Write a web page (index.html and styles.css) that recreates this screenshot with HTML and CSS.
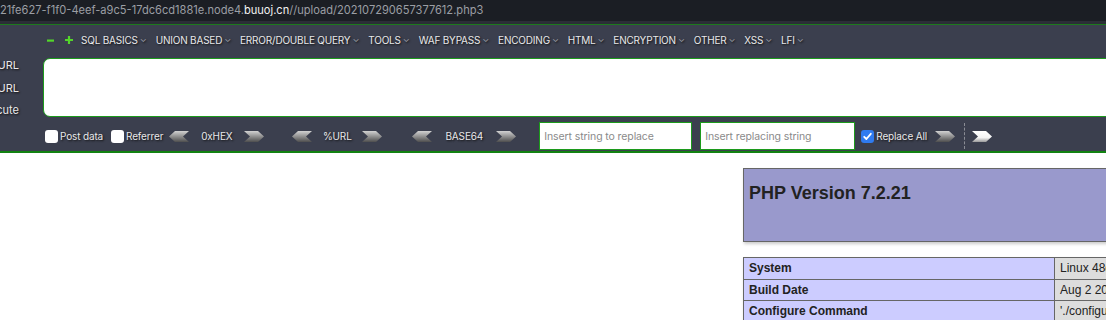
FILE: index.html
```html
<!DOCTYPE html>
<html lang="en">
<head>
  <meta charset="UTF-8" />
  <title>phpinfo()</title>
  <link rel="stylesheet" href="styles.css">
</head>
<body>

  <!-- shared arrow shapes -->
  <svg class="defs" width="0" height="0">
    <defs>
      <linearGradient id="g-grey" x1="0" y1="0" x2="0" y2="1">
        <stop offset="0" stop-color="#d2d2d2"/>
        <stop offset="1" stop-color="#4e4e4e"/>
      </linearGradient>
      <linearGradient id="g-white" x1="0" y1="0" x2="0" y2="1">
        <stop offset="0" stop-color="#ffffff"/>
        <stop offset="0.6" stop-color="#f4f4f4"/>
        <stop offset="1" stop-color="#9a9a9a"/>
      </linearGradient>
      <symbol id="arr-l" viewBox="0 0 20 11">
        <path d="M0 5.5 L6 0 H20 L14 5.5 L20 11 H6 Z"/>
      </symbol>
      <symbol id="arr-r" viewBox="0 0 20 11">
        <path d="M20 5.5 L14 0 H0 L6 5.5 L0 11 H14 Z"/>
      </symbol>
    </defs>
  </svg>

  <div class="urlbar">
    <span>21fe627-f1f0-4eef-a9c5-17dc6cd1881e.node4.</span><span class="host">buuoj.cn</span><span>//upload/202107290657377612.php3</span>
  </div>
  <div class="urlbar-edge"></div>

  <div class="hackbar">
    <div class="menu">
      <span class="tog">
        <svg width="7" height="7" viewBox="0 0 7 7"><rect x="0" y="2.5" width="7" height="2.2" fill="#53d62a"/></svg>
      </span>
      <span class="tog">
        <svg width="8" height="8" viewBox="0 0 8 8"><path d="M2.9 0 H5.1 V2.9 H8 V5.1 H5.1 V8 H2.9 V5.1 H0 V2.9 H2.9 Z" fill="#53d62a"/></svg>
      </span>
      <span class="item">SQL BASICS<i>⌄</i></span>
      <span class="item">UNION BASED<i>⌄</i></span>
      <span class="item">ERROR/DOUBLE QUERY<i>⌄</i></span>
      <span class="item">TOOLS<i>⌄</i></span>
      <span class="item">WAF BYPASS<i>⌄</i></span>
      <span class="item">ENCODING<i>⌄</i></span>
      <span class="item">HTML<i>⌄</i></span>
      <span class="item">ENCRYPTION<i>⌄</i></span>
      <span class="item">OTHER<i>⌄</i></span>
      <span class="item">XSS<i>⌄</i></span>
      <span class="item">LFI<i>⌄</i></span>
    </div>

    <div class="main">
      <div class="actions">
        <span>Load URL</span>
        <span>Split URL</span>
        <span>Execute</span>
      </div>
      <textarea class="url-input"></textarea>
    </div>

    <div class="options">
      <label class="opt"><span class="box"></span>Post data</label>
      <label class="opt"><span class="box"></span>Referrer</label>

      <span class="enc">
        <svg class="arr"><use href="#arr-l" fill="url(#g-grey)"/></svg>
        <span class="enc-name hex">0xHEX</span>
        <svg class="arr"><use href="#arr-r" fill="url(#g-grey)"/></svg>
      </span>
      <span class="enc">
        <svg class="arr"><use href="#arr-l" fill="url(#g-grey)"/></svg>
        <span class="enc-name pct">%URL</span>
        <svg class="arr"><use href="#arr-r" fill="url(#g-grey)"/></svg>
      </span>
      <span class="enc">
        <svg class="arr"><use href="#arr-l" fill="url(#g-grey)"/></svg>
        <span class="enc-name b64">BASE64</span>
        <svg class="arr"><use href="#arr-r" fill="url(#g-grey)"/></svg>
      </span>

      <input class="rep" type="text" placeholder="Insert string to replace">
      <input class="rep" type="text" placeholder="Insert replacing string">

      <label class="opt all">
        <span class="box on">
          <svg width="13" height="13" viewBox="0 0 13 13"><path d="M3.2 6.8 L5.4 9 L9.8 3.8" fill="none" stroke="#fff" stroke-width="1.8" stroke-linecap="round" stroke-linejoin="round"/></svg>
        </span>Replace All
      </label>
      <svg class="arr go"><use href="#arr-r" fill="url(#g-grey)"/></svg>
      <span class="sep"></span>
      <svg class="arr go2"><use href="#arr-r" fill="url(#g-white)"/></svg>
    </div>
  </div>

  <div class="center">
    <table class="head">
      <tr><td class="h"><h1>PHP Version 7.2.21</h1></td></tr>
    </table>
    <table class="info">
      <tr><td class="e">System</td><td class="v">Linux 48d2c0e7a1f3 4.15.0-1067-aws #71-Ubuntu SMP x86_64</td></tr>
      <tr><td class="e">Build Date</td><td class="v">Aug 2 2019 23:51:23</td></tr>
      <tr><td class="e">Configure Command</td><td class="v">'./configure' '--build=x86_64-linux-gnu'</td></tr>
    </table>
  </div>

</body>
</html>
```

FILE: styles.css
```css
body {
  margin: 0;
  background-color: #fff;
  overflow: hidden;
  font-family: Inter, 'Noto Sans', sans-serif;
}

.defs {
  position: absolute;
}

/* address bar */
.urlbar {
  height: 21px;
  line-height: 21px;
  background-color: #1b1e24;
  color: #9b9ea4;
  font-size: 11.1px;
  white-space: nowrap;
  overflow: hidden;
}

.urlbar .host {
  color: #f2f2f2;
}

.urlbar-edge {
  height: 3px;
  background-color: #2b2e36;
}

/* hackbar panel */
.hackbar {
  background-color: #3b3f4e;
  border-top: 1px solid #1d7a1d;
  border-bottom: 2px solid #128212;
  color: #e8e8ea;
  text-shadow: 1px 1px 2px #111;
}

.menu {
  height: 30px;
  padding-bottom: 3px;
  display: flex;
  align-items: center;
  padding-left: 47px;
  font-size: 10px;
  letter-spacing: -0.2px;
  white-space: nowrap;
}

.tog {
  display: flex;
  align-items: center;
  margin-right: 11px;
}

.tog + .tog {
  margin-right: 8px;
}

.item {
  margin-right: 9px;
}

.item i {
  font-style: normal;
  color: #9a9ca4;
  font-size: 9px;
  margin-left: 2px;
  position: relative;
  top: -2px;
}

.main {
  display: flex;
  height: 59px;
}

.actions {
  width: 19px;
  display: flex;
  flex-direction: column;
  align-items: flex-end;
  justify-content: space-between;
  padding: 0;
  font-size: 11px;
  white-space: nowrap;
  margin-right: 24px;
}

.actions span {
  line-height: 14px;
}

.url-input {
  flex: 1;
  margin: 0 -20px 0 0;
  border: 1px solid #1c9a1c;
  border-radius: 7px;
  background-color: #fff;
  resize: none;
  box-sizing: border-box;
  height: 59px;
}

.options {
  height: 30px;
  margin-top: 4px;
  display: flex;
  align-items: center;
  padding-left: 45px;
  font-size: 10px;
  letter-spacing: -0.15px;
  white-space: nowrap;
}

.opt {
  display: flex;
  align-items: center;
  margin-right: 8px;
}

.opt + .opt {
  margin-right: 6px;
}

.box {
  width: 13px;
  height: 13px;
  border-radius: 3px;
  background-color: #fff;
  margin-right: 2px;
  display: inline-flex;
}

.box.on {
  background-color: #2f7bf0;
}

.enc {
  display: flex;
  align-items: center;
}

.arr {
  width: 20px;
  height: 11px;
}

.enc-name {
  text-align: center;
}

.hex { width: 55px; }
.pct { width: 50px; }
.b64 { width: 64px; }

.enc + .enc {
  margin-left: 28px;
}

.enc + .enc + .enc {
  margin-left: 30px;
}

.rep {
  width: 153px;
  height: 28px;
  box-sizing: border-box;
  border: 1px solid #1c9a1c;
  padding: 0 4px;
  font-family: Inter, 'Noto Sans', sans-serif;
  font-size: 10.5px;
  letter-spacing: -0.1px;
  outline: none;
}

.rep::placeholder {
  color: #8a8a8a;
}

.rep:first-of-type {
  margin-left: 23px;
}

.rep + .rep {
  width: 155px;
  margin-left: 8px;
}

.opt.all {
  margin-left: 6px;
  margin-right: 8px;
}

.go {
  margin-right: 9px;
}

.sep {
  height: 26px;
  border-left: 1px dashed #8a8c94;
  margin-right: 7px;
}

/* phpinfo */
.center {
  margin-left: 743px;
  padding-top: 15px;
  font-family: 'Liberation Sans', Arial, sans-serif;
  color: #222;
}

.center table {
  border-collapse: collapse;
  width: 934px;
  box-shadow: 1px 2px 3px #ccc;
}

.center td {
  border: 1px solid #666;
  font-size: 12px;
  line-height: 12.5px;
  padding: 4px 5px;
  vertical-align: baseline;
}

.head td {
  height: 64px;
  vertical-align: top;
}

.h {
  background-color: #99c;
  font-weight: bold;
}

.h h1 {
  font-size: 18px;
  line-height: 21px;
  margin: 10px 0 0;
}

.info {
  margin-top: 15px;
}

.e {
  background-color: #ccf;
  width: 300px;
  font-weight: bold;
}

.v {
  background-color: #ddd;
}
```
